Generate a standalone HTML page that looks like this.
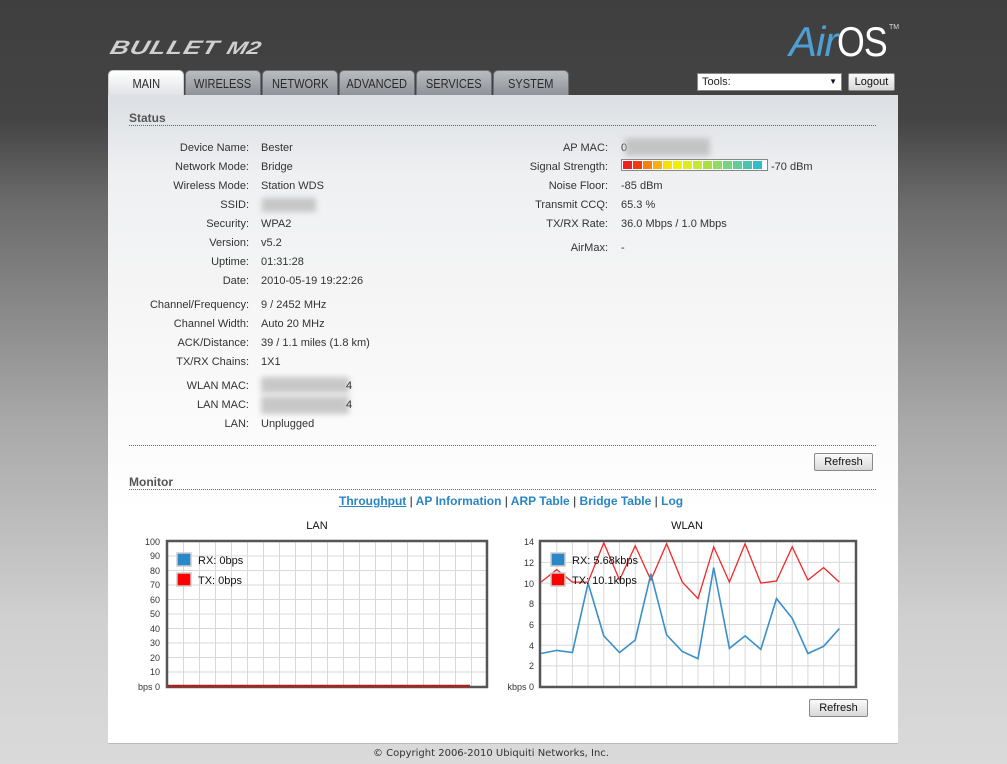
<!DOCTYPE html>
<html><head><meta charset="utf-8"><style>
*{margin:0;padding:0;box-sizing:border-box}
body{width:1007px;height:764px;overflow:hidden;position:relative;font-family:"Liberation Sans",sans-serif;font-size:11px;color:#222;background:linear-gradient(180deg,#3f3f3f 0px,#444 120px,#6a6a6a 200px,#a8a8a8 420px,#d0d0d0 620px,#dadada 764px)}
.a{position:absolute;white-space:nowrap}
.l{position:absolute;width:200px;text-align:right;white-space:nowrap;color:#333;margin-top:2px}
.v{position:absolute;white-space:nowrap;color:#333;margin-top:2px}
.tab{position:absolute;top:70px;height:25px;border-radius:5px 5px 0 0;background:linear-gradient(#b9bcc1,#8f9399);color:#2a2a2a;font-size:13px;text-align:center;line-height:26px;border:1px solid #6c6f74;border-bottom:none}
.tab span{display:inline-block;transform:scaleX(.85)}
.blur{position:absolute;background:#bbb;filter:blur(3px);opacity:.8}
.hr{position:absolute;left:129px;width:747px;border-top:1px dotted #666}
.btn{position:absolute;height:18px;border:1px solid #888;border-radius:2px;background:linear-gradient(#fafafa,#d8d8d8);font-size:11px;text-align:center;line-height:16px;color:#111}
h3{position:absolute;font-size:12px;color:#555;font-weight:bold}
</style></head><body>
<div class="a" style="left:114px;top:36px;font-size:26px;font-weight:bold;font-style:italic;color:#d0d0d0;letter-spacing:1px;transform:scaleY(.75) skewX(-12deg);transform-origin:left top">BULLET <span style="font-size:24px;letter-spacing:0">M2</span></div>
<div class="a" style="left:789px;top:18px;font-size:42px;letter-spacing:-1px"><span style="font-style:italic;color:#4d9fd6">Air</span><span style="color:#fff;display:inline-block;transform:scaleX(.85);transform-origin:left">OS</span></div>
<div class="a" style="left:889px;top:24px;font-size:7px;color:#ddd">TM</div>
<div class="a" style="left:697px;top:73px;width:145px;height:18px;background:#fff;border:1px solid #888;font-size:11px;line-height:16px;padding-left:4px;color:#222">Tools:<span style="position:absolute;right:4px;top:0;font-size:8px;color:#113">▼</span></div>
<div class="btn" style="left:848px;top:73px;width:47px">Logout</div>

<div class="tab" style="left:108px;width:76px;background:linear-gradient(#fff,#e1e3e6);border-color:#ccc"><span>MAIN</span></div>
<div class="tab" style="left:185px;width:76px"><span>WIRELESS</span></div>
<div class="tab" style="left:262px;width:76px"><span>NETWORK</span></div>
<div class="tab" style="left:339px;width:76px"><span>ADVANCED</span></div>
<div class="tab" style="left:416px;width:76px"><span>SERVICES</span></div>
<div class="tab" style="left:493px;width:76px"><span>SYSTEM</span></div>

<div class="a" style="left:108px;top:95px;width:790px;height:648px;background:linear-gradient(#dcdfe3 0,#eef0f2 80px,#f5f5f5 200px,#fff 420px)"></div>

<h3 style="left:129px;top:111px">Status</h3>
<div class="hr" style="top:125px"></div>

<div class="l" style="left:49px;top:140px">Device Name:</div><div class="v" style="left:261px;top:140px">Bester</div>
<div class="l" style="left:49px;top:159px">Network Mode:</div><div class="v" style="left:261px;top:159px">Bridge</div>
<div class="l" style="left:49px;top:178px">Wireless Mode:</div><div class="v" style="left:261px;top:178px">Station WDS</div>
<div class="l" style="left:49px;top:197px">SSID:</div><div class="blur" style="left:262px;top:198px;width:54px;height:14px"></div>
<div class="l" style="left:49px;top:216px">Security:</div><div class="v" style="left:261px;top:216px">WPA2</div>
<div class="l" style="left:49px;top:235px">Version:</div><div class="v" style="left:261px;top:235px">v5.2</div>
<div class="l" style="left:49px;top:254px">Uptime:</div><div class="v" style="left:261px;top:254px">01:31:28</div>
<div class="l" style="left:49px;top:273px">Date:</div><div class="v" style="left:261px;top:273px">2010-05-19 19:22:26</div>
<div class="l" style="left:49px;top:297px">Channel/Frequency:</div><div class="v" style="left:261px;top:297px">9 / 2452 MHz</div>
<div class="l" style="left:49px;top:316px">Channel Width:</div><div class="v" style="left:261px;top:316px">Auto 20 MHz</div>
<div class="l" style="left:49px;top:335px">ACK/Distance:</div><div class="v" style="left:261px;top:335px">39 / 1.1 miles (1.8 km)</div>
<div class="l" style="left:49px;top:354px">TX/RX Chains:</div><div class="v" style="left:261px;top:354px">1X1</div>
<div class="l" style="left:49px;top:378px">WLAN MAC:</div><div class="blur" style="left:261px;top:377px;width:88px;height:16px"></div><div class="v" style="left:346px;top:378px">4</div>
<div class="l" style="left:49px;top:397px">LAN MAC:</div><div class="blur" style="left:261px;top:396px;width:88px;height:18px"></div><div class="v" style="left:346px;top:397px">4</div>
<div class="l" style="left:49px;top:416px">LAN:</div><div class="v" style="left:261px;top:416px">Unplugged</div>

<div class="l" style="left:408px;top:140px">AP MAC:</div><div class="v" style="left:621px;top:140px">0</div><div class="blur" style="left:625px;top:138px;width:85px;height:18px"></div>
<div class="l" style="left:408px;top:159px">Signal Strength:</div>
<div class="a" style="left:621px;top:159px;width:147px;height:12px;border:1px solid #888;background:#fff;padding:1px;display:flex;gap:1px">
<i style="width:9px;background:#ee2020"></i><i style="width:9px;background:#f03a10"></i><i style="width:9px;background:#f58010"></i><i style="width:9px;background:#f8b010"></i><i style="width:9px;background:#f8e000"></i><i style="width:9px;background:#f0f000"></i><i style="width:9px;background:#dcec20"></i><i style="width:9px;background:#c4e830"></i><i style="width:9px;background:#a8e040"></i><i style="width:9px;background:#90dc60"></i><i style="width:9px;background:#78d480"></i><i style="width:9px;background:#60cc98"></i><i style="width:9px;background:#48c4b0"></i><i style="width:9px;background:#30bcc8"></i></div>
<div class="v" style="left:771px;top:159px">-70 dBm</div>
<div class="l" style="left:408px;top:178px">Noise Floor:</div><div class="v" style="left:621px;top:178px">-85 dBm</div>
<div class="l" style="left:408px;top:197px">Transmit CCQ:</div><div class="v" style="left:621px;top:197px">65.3 %</div>
<div class="l" style="left:408px;top:216px">TX/RX Rate:</div><div class="v" style="left:621px;top:216px">36.0 Mbps / 1.0 Mbps</div>
<div class="l" style="left:408px;top:240px">AirMax:</div><div class="v" style="left:621px;top:240px">-</div>

<div class="hr" style="top:445px"></div>
<div class="btn" style="left:814px;top:453px;width:59px">Refresh</div>
<h3 style="left:129px;top:475px">Monitor</h3>
<div class="hr" style="top:489px"></div>
<div class="a" style="left:339px;top:494px;font-size:12px;font-weight:bold;color:#2a85c4"><u>Throughput</u> <span style="color:#222;font-weight:normal">|</span> AP Information <span style="color:#222;font-weight:normal">|</span> ARP Table <span style="color:#222;font-weight:normal">|</span> Bridge Table <span style="color:#222;font-weight:normal">|</span> Log</div>

<svg class="a" style="left:0;top:0" width="1007" height="764" font-family="Liberation Sans,sans-serif" font-size="9" fill="#333">
<text x="317" y="529" font-size="11" text-anchor="middle" fill="#111">LAN</text>
<text x="687" y="529" font-size="11" text-anchor="middle" fill="#111">WLAN</text>
<g stroke="#d8d8d8" stroke-width="1">
<rect x="167" y="541.5" width="320" height="145" fill="#fff" stroke="none"/>
<path d="M167 556h320M167 570.5h320M167 585h320M167 599.5h320M167 614h320M167 628.5h320M167 643h320M167 657.5h320M167 672h320"/>
<path d="M183.5 541v146M199.5 541v146M215.5 541v146M231.5 541v146M247.5 541v146M263.5 541v146M279.5 541v146M295.5 541v146M311.5 541v146M327.5 541v146M343.5 541v146M359.5 541v146M375.5 541v146M391.5 541v146M407.5 541v146M423.5 541v146M439.5 541v146M455.5 541v146M471.5 541v146"/>
<rect x="540" y="541.5" width="316" height="145" fill="#fff" stroke="none"/>
<path d="M540 562.4h316M540 583.1h316M540 603.8h316M540 624.5h316M540 645.2h316M540 665.9h316"/>
<path d="M556.7 541v146M572.4 541v146M588.1 541v146M603.8 541v146M619.5 541v146M635.2 541v146M650.9 541v146M666.6 541v146M682.3 541v146M698 541v146M713.7 541v146M729.4 541v146M745.1 541v146M760.8 541v146M776.5 541v146M792.2 541v146M807.9 541v146M823.6 541v146M839.3 541v146"/>
</g>
<rect x="167" y="541" width="320" height="146" fill="none" stroke="#555" stroke-width="2.5"/>
<rect x="540" y="541" width="316" height="146" fill="none" stroke="#555" stroke-width="2.5"/>
<line x1="168" y1="686" x2="470" y2="686" stroke="#b02020" stroke-width="2.5"/>
<g text-anchor="end">
<text x="160" y="545">100</text><text x="160" y="559">90</text><text x="160" y="574">80</text><text x="160" y="588">70</text><text x="160" y="603">60</text><text x="160" y="617">50</text><text x="160" y="632">40</text><text x="160" y="646">30</text><text x="160" y="661">20</text><text x="160" y="675">10</text><text x="160" y="690">bps 0</text>
<text x="534" y="545">14</text><text x="534" y="566">12</text><text x="534" y="587">10</text><text x="534" y="607">8</text><text x="534" y="628">6</text><text x="534" y="649">4</text><text x="534" y="669">2</text><text x="534" y="690">kbps 0</text>
</g>
<polyline fill="none" stroke="#ee2a2a" stroke-width="1.3" points="541,582.1 556.7,569.6 572.4,582.1 588.1,582.1 603.8,542.7 619.5,580 635.2,545.8 650.9,580 666.6,543.7 682.3,582.1 698,598.6 713.7,546.8 729.4,582.1 745.1,543.7 760.8,583.1 776.5,581 792.2,546.8 807.9,580 823.6,567.6 839.3,582.1"/>
<polyline fill="none" stroke="#3a8fc8" stroke-width="1.6" points="541,653.5 556.7,650.4 572.4,652.5 588.1,583.1 603.8,635.9 619.5,652.5 635.2,640.1 650.9,573.8 666.6,634.9 682.3,651.5 698,658.7 713.7,567.6 729.4,648.4 745.1,635.9 760.8,649.4 776.5,598.6 792.2,618.3 807.9,653.5 823.6,646.3 839.3,628.7"/>
<g stroke="#ccc" stroke-width="1.5">
<rect x="177" y="553" width="14" height="13" fill="#2a88c8"/><rect x="177" y="573" width="14" height="13" fill="#f00"/>
<rect x="551" y="553" width="14" height="13" fill="#2a88c8"/><rect x="551" y="573" width="14" height="13" fill="#f00"/>
</g>
<g font-size="11" fill="#111">
<text x="198" y="564">RX: 0bps</text><text x="198" y="584">TX: 0bps</text>
<text x="572" y="564">RX: 5.68kbps</text><text x="572" y="584">TX: 10.1kbps</text>
</g>
</svg>
<div class="btn" style="left:809px;top:699px;width:59px">Refresh</div>
<div class="a" style="left:108px;top:743px;width:790px;border-top:1px solid #bbb"></div>
<div class="a" style="left:373px;top:748px;font-family:'DejaVu Sans',sans-serif;font-size:10px;color:#333">© Copyright 2006-2010 Ubiquiti Networks, Inc.</div>
</body></html>
